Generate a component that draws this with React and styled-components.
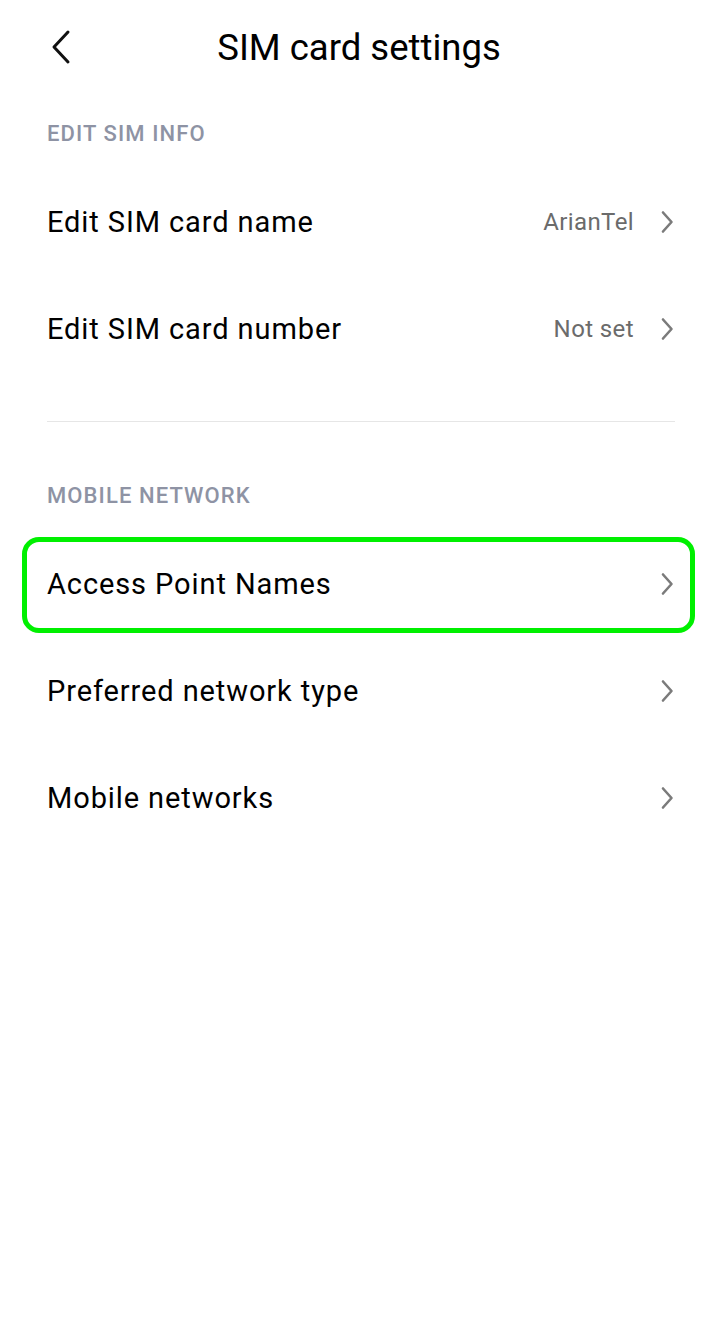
import React from "react";
import styled, { createGlobalStyle } from "styled-components";

const GlobalStyle = createGlobalStyle`
  body {
    margin: 0;
    background: #ffffff;
    font-family: Roboto, "Liberation Sans", sans-serif;
    color: #000000;
  }
`;

const Screen = styled.div`
  width: 715px;
  min-height: 1330px;
  background: #ffffff;
`;

const Header = styled.header`
  position: relative;
  height: 96px;
  display: flex;
  align-items: center;
  justify-content: center;
`;

const BackButton = styled.button`
  position: absolute;
  left: 44px;
  top: 24px;
  width: 36px;
  height: 46px;
  padding: 0;
  border: none;
  background: transparent;
  display: flex;
  align-items: center;
  justify-content: center;
`;

const Title = styled.h1`
  margin: 0 0 0 3px;
  font-size: 36.5px;
  font-weight: 400;
  line-height: 1;
`;

const SectionTitle = styled.div`
  padding: ${(p) => p.top}px 47px 21px;
  line-height: 26px;
  font-size: 22px;
  font-weight: 500;
  letter-spacing: 1.1px;
  color: #8e93a4;
  text-transform: uppercase;
`;

const Row = styled.div`
  position: relative;
  height: 107px;
  padding: 0 41px 0 47px;
  display: flex;
  align-items: center;
  justify-content: space-between;

  ${(p) =>
    p.highlighted &&
    `
    &::after {
      content: "";
      position: absolute;
      left: 22px;
      right: 20px;
      top: 7px;
      bottom: 4px;
      border: 5px solid #00f000;
      border-radius: 17px;
      pointer-events: none;
    }
  `}
`;

const Label = styled.span`
  font-size: 29px;
  letter-spacing: 0.9px;
  color: #000000;
`;

const Trailing = styled.div`
  display: flex;
  align-items: center;
  gap: 26px;
`;

const Value = styled.span`
  font-size: 24px;
  letter-spacing: 0.4px;
  color: #6b6b6b;
`;

const Divider = styled.div`
  margin: 39px 40px 0 47px;
  height: 1px;
  background: #e6e6e6;
`;

const Chevron = () => (
  <svg width="14" height="24" viewBox="0 0 14 24">
    <path
      d="M3 2.5 L11.5 12 L3 21.5"
      fill="none"
      stroke="#7b7b7b"
      strokeWidth="2.6"
      strokeLinecap="round"
      strokeLinejoin="round"
    />
  </svg>
);

const BackIcon = () => (
  <svg width="26" height="36" viewBox="0 0 26 36">
    <path
      d="M19 3 L5 18 L19 33"
      fill="none"
      stroke="#111111"
      strokeWidth="3"
      strokeLinecap="round"
      strokeLinejoin="round"
    />
  </svg>
);

function SettingRow({ label, value, highlighted }) {
  return (
    <Row highlighted={highlighted}>
      <Label>{label}</Label>
      <Trailing>
        {value && <Value>{value}</Value>}
        <Chevron />
      </Trailing>
    </Row>
  );
}

export default function App() {
  return (
    <Screen>
      <GlobalStyle />
      <Header>
        <BackButton aria-label="Back">
          <BackIcon />
        </BackButton>
        <Title>SIM card settings</Title>
      </Header>

      <SectionTitle top={25}>Edit SIM info</SectionTitle>
      <SettingRow label="Edit SIM card name" value="ArianTel" />
      <SettingRow label="Edit SIM card number" value="Not set" />

      <Divider />

      <SectionTitle top={61}>Mobile network</SectionTitle>
      <SettingRow label="Access Point Names" highlighted />
      <SettingRow label="Preferred network type" />
      <SettingRow label="Mobile networks" />
    </Screen>
  );
}
